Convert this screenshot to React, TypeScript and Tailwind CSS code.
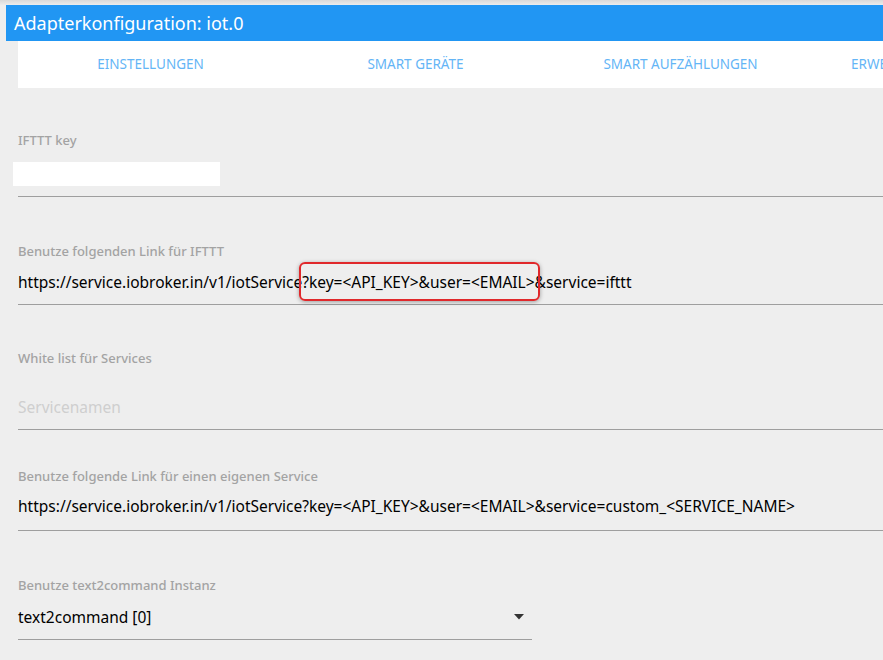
const font = { fontFamily: '"Noto Sans", "Open Sans", sans-serif' };

function Field({ label, children, className = "" }: { label: string; children: React.ReactNode; className?: string }) {
  return (
    <div className={`pl-[18px] ${className}`}>
      <div className="text-[13px] font-medium text-[#a3a3a3] leading-4">{label}</div>
      {children}
    </div>
  );
}

const tabs = ["EINSTELLUNGEN", "SMART GERÄTE", "SMART AUFZÄHLUNGEN", "ERWEITERTE EINSTELLUNGEN"];

export default function App() {
  return (
    <div className="w-[883px] h-[660px] overflow-hidden bg-[#eeeeee] text-black" style={font}>
      <div className="h-[5px] bg-gradient-to-b from-[#d9d9d9] to-[#ececec]" />
      <div className="ml-[6px] h-[36px] bg-[#2196f3] flex items-center px-2">
        <span className="text-white text-[18px] leading-none">Adapterkonfiguration: iot.0</span>
      </div>
      <div className="ml-[18px] h-[47px] bg-white flex overflow-hidden">
        {tabs.map((t) => (
          <div key={t} className="w-[265px] shrink-0 flex items-center justify-center text-[13.5px] text-[#64b5f6] whitespace-nowrap">
            {t}
          </div>
        ))}
      </div>

      <div className="pt-[44px]">
        <Field label="IFTTT key">
          <div className="ml-[-5px] mt-[14px] w-[207px] h-[24px] bg-white" />
          <div className="mt-[10px] border-b border-[#9e9e9e]" />
        </Field>

        <Field label="Benutze folgenden Link für IFTTT" className="mt-[46px]">
          <div className="mt-[13px] text-[15.5px] leading-5 whitespace-nowrap">
            https://service.iobroker.in/v1/iotService?
            <span className="relative">
              key=&lt;API_KEY&gt;&amp;user=&lt;EMAIL&gt;
              <span className="absolute -left-[10px] -right-[5px] -top-[9px] -bottom-[8px] border-2 border-[#e0282b] rounded-[6px] shadow-[0_1px_4px_rgba(0,0,0,0.35)]" />
            </span>
            &amp;service=ifttt
          </div>
          <div className="mt-[12px] border-b border-[#9e9e9e]" />
        </Field>

        <Field label="White list für Services" className="mt-[45px]">
          <div className="mt-[31px] text-[15.5px] leading-5 text-[#cfcfcf]">Servicenamen</div>
          <div className="mt-[12px] border-b border-[#9e9e9e]" />
        </Field>

        <Field label="Benutze folgende Link für einen eigenen Service" className="mt-[38px]">
          <div className="mt-[12px] text-[15.5px] leading-5 whitespace-nowrap">
            https://service.iobroker.in/v1/iotService?key=&lt;API_KEY&gt;&amp;user=&lt;EMAIL&gt;&amp;service=custom_&lt;SERVICE_NAME&gt;
          </div>
          <div className="mt-[14px] border-b border-[#9e9e9e]" />
        </Field>

        <Field label="Benutze text2command Instanz" className="mt-[46px]">
          <div className="w-[514px]">
            <div className="mt-[14px] flex items-center justify-between text-[15.5px] leading-5">
              <span>text2command [0]</span>
              <svg width="10" height="6" viewBox="0 0 10 6" className="mr-[8px]">
                <path d="M0 0h10L5 5.5z" fill="#333" />
              </svg>
            </div>
            <div className="mt-[12px] border-b border-[#9e9e9e]" />
          </div>
        </Field>
      </div>
    </div>
  );
}
